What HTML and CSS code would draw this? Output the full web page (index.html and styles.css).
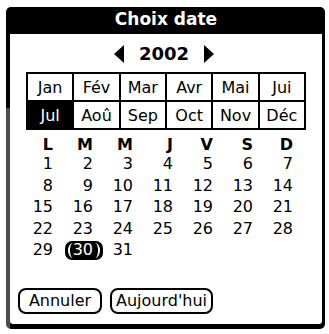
FILE: index.html
```html
<!DOCTYPE html>
<html lang="fr">
<head>
<meta charset="utf-8">
<title>Choix date</title>
<link rel="stylesheet" href="styles.css">
</head>
<body>
<div class="frame">
  <div class="title">Choix date</div>
  <div class="panel">
    <div class="year-row">
      <span class="tri tri-left"></span>
      <span class="year">2002</span>
      <span class="tri tri-right"></span>
    </div>
    <div class="months">
      <div class="month">Jan</div>
      <div class="month">Fév</div>
      <div class="month">Mar</div>
      <div class="month">Avr</div>
      <div class="month">Mai</div>
      <div class="month">Jui</div>
      <div class="month sel">Jul</div>
      <div class="month">Aoû</div>
      <div class="month">Sep</div>
      <div class="month">Oct</div>
      <div class="month">Nov</div>
      <div class="month">Déc</div>
    </div>
    <div class="cal">
      <div class="dow">L</div><div class="dow">M</div><div class="dow">M</div><div class="dow">J</div><div class="dow">V</div><div class="dow">S</div><div class="dow">D</div>
      <div class="day">1</div><div class="day">2</div><div class="day">3</div><div class="day">4</div><div class="day">5</div><div class="day">6</div><div class="day">7</div>
      <div class="day">8</div><div class="day">9</div><div class="day">10</div><div class="day">11</div><div class="day">12</div><div class="day">13</div><div class="day">14</div>
      <div class="day">15</div><div class="day">16</div><div class="day">17</div><div class="day">18</div><div class="day">19</div><div class="day">20</div><div class="day">21</div>
      <div class="day">22</div><div class="day">23</div><div class="day">24</div><div class="day">25</div><div class="day">26</div><div class="day">27</div><div class="day">28</div>
      <div class="day">29</div><div class="day"><span class="today">30</span></div><div class="day">31</div>
    </div>
    <div class="buttons">
      <button class="btn">Annuler</button>
      <button class="btn">Aujourd'hui</button>
    </div>
  </div>
</div>
</body>
</html>
```
FILE: styles.css
```css
html, body {
  margin: 0;
  padding: 0;
  background: #fff;
}
body {
  font-family: "DejaVu Sans", sans-serif;
  color: #000;
}
.frame {
  box-sizing: border-box;
  width: 319px;
  height: 322px;
  margin: 7px 0 0 6px;
  padding: 0 3px 5px 4px;
  border-radius: 5px;
  background:
    linear-gradient(#000 0 101px, #4d4d4d 101px) left top / 4px 100% no-repeat,
    #000;
  display: flex;
  flex-direction: column;
}
.title {
  height: 27px;
  line-height: 25px;
  text-align: center;
  color: #fff;
  font-weight: bold;
  font-size: 17px;
}
.panel {
  flex: 1;
  background: #fff;
  border-radius: 0 0 3px 3px;
  display: flex;
  flex-direction: column;
}
.year-row {
  display: flex;
  justify-content: center;
  align-items: center;
  gap: 15px;
  height: 20px;
  margin-top: 10px;
  padding-right: 4px;
}
.year {
  font-weight: bold;
  font-size: 18px;
  line-height: 20px;
}
.tri {
  width: 0;
  height: 0;
  border-top: 9px solid transparent;
  border-bottom: 9px solid transparent;
}
.tri-left {
  border-right: 10px solid #000;
}
.tri-right {
  border-left: 10px solid #000;
}
.months {
  box-sizing: border-box;
  width: 280px;
  height: 58px;
  margin: 8px 0 0 16px;
  padding: 2px;
  background: #000;
  display: grid;
  grid-template-columns: repeat(6, 1fr);
  grid-template-rows: repeat(2, 1fr);
  gap: 2px;
}
.month {
  background: #fff;
  font-size: 16px;
  display: flex;
  align-items: center;
  justify-content: center;
}
.month.sel {
  background: #000;
  color: #fff;
}
.cal {
  display: grid;
  grid-template-columns: repeat(7, 40px);
  grid-auto-rows: 21.5px;
  grid-template-rows: 16px;
  margin: 7px 0 0 3px;
}
.dow {
  font-weight: bold;
  font-size: 16px;
  line-height: 16px;
  text-align: right;
}
.day {
  font-size: 16px;
  line-height: 21.5px;
  text-align: right;
}
.today {
  position: relative;
  z-index: 0;
  color: #fff;
}
.today::before {
  content: "";
  position: absolute;
  left: -8px;
  right: -10px;
  top: 1px;
  bottom: -1px;
  background: #000;
  border-radius: 7px;
  z-index: -1;
}
.today::after {
  content: "";
  position: absolute;
  left: -5px;
  right: -7px;
  top: 3px;
  bottom: 1px;
  border-left: 2px solid #fff;
  border-right: 2px solid #fff;
  border-radius: 6px / 9px;
  z-index: -1;
}
.buttons {
  margin-top: auto;
  margin-bottom: 10px;
  padding-left: 8px;
  display: flex;
  gap: 8px;
}
.btn {
  box-sizing: border-box;
  height: 26px;
  padding: 0 6px;
  border: 2px solid #000;
  border-radius: 8px;
  background: #fff;
  color: #000;
  font-family: "DejaVu Sans", sans-serif;
  font-size: 16px;
  line-height: 20px;
}
.btn:first-child {
  width: 84px;
}
.btn:last-child {
  width: 103px;
  padding: 0 3px;
}
```
